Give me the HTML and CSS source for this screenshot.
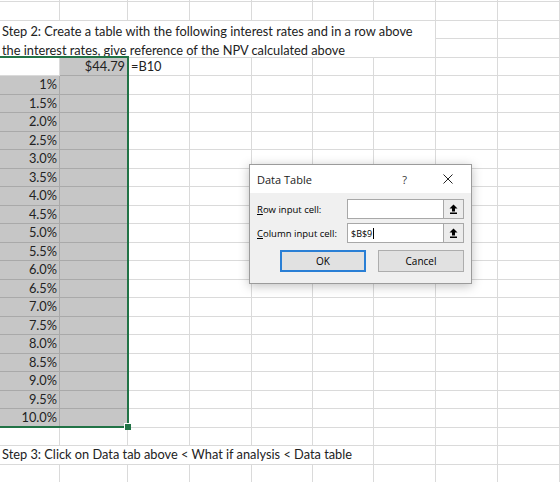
FILE: index.html
```html
<!DOCTYPE html>
<html lang="en">
<head>
    <meta charset="UTF-8">
    <meta name="viewport" content="width=device-width, initial-scale=1.0">
    <title>NPV Data Table</title>
    <link rel="stylesheet" href="styles.css">
</head>
<body>
    <div class="sheet">
        <!-- top sliver of the row above -->
        <div></div><div></div><div></div><div></div><div></div><div></div><div></div><div></div><div></div>
        <!-- blank row -->
        <div></div><div></div><div></div><div></div><div></div><div></div><div></div><div></div><div></div>

        <!-- merged instruction cell -->
        <div class="note">Step 2: Create a table with the following interest rates and in a row above<br>the interest rates, give reference of the NPV calculated above</div>
        <div></div><div></div>
        <div></div><div></div>

        <!-- NPV reference row -->
        <div></div><div class="sel num">$44.79</div><div>=B10</div><div></div><div></div><div></div><div></div><div></div><div></div>

        <!-- interest rates -->
        <div class="sel num">1%</div><div class="sel"></div><div></div><div></div><div></div><div></div><div></div><div></div><div></div>
        <div class="sel num">1.5%</div><div class="sel"></div><div></div><div></div><div></div><div></div><div></div><div></div><div></div>
        <div class="sel num">2.0%</div><div class="sel"></div><div></div><div></div><div></div><div></div><div></div><div></div><div></div>
        <div class="sel num">2.5%</div><div class="sel"></div><div></div><div></div><div></div><div></div><div></div><div></div><div></div>
        <div class="sel num">3.0%</div><div class="sel"></div><div></div><div></div><div></div><div></div><div></div><div></div><div></div>
        <div class="sel num">3.5%</div><div class="sel"></div><div></div><div></div><div></div><div></div><div></div><div></div><div></div>
        <div class="sel num">4.0%</div><div class="sel"></div><div></div><div></div><div></div><div></div><div></div><div></div><div></div>
        <div class="sel num">4.5%</div><div class="sel"></div><div></div><div></div><div></div><div></div><div></div><div></div><div></div>
        <div class="sel num">5.0%</div><div class="sel"></div><div></div><div></div><div></div><div></div><div></div><div></div><div></div>
        <div class="sel num">5.5%</div><div class="sel"></div><div></div><div></div><div></div><div></div><div></div><div></div><div></div>
        <div class="sel num">6.0%</div><div class="sel"></div><div></div><div></div><div></div><div></div><div></div><div></div><div></div>
        <div class="sel num">6.5%</div><div class="sel"></div><div></div><div></div><div></div><div></div><div></div><div></div><div></div>
        <div class="sel num">7.0%</div><div class="sel"></div><div></div><div></div><div></div><div></div><div></div><div></div><div></div>
        <div class="sel num">7.5%</div><div class="sel"></div><div></div><div></div><div></div><div></div><div></div><div></div><div></div>
        <div class="sel num">8.0%</div><div class="sel"></div><div></div><div></div><div></div><div></div><div></div><div></div><div></div>
        <div class="sel num">8.5%</div><div class="sel"></div><div></div><div></div><div></div><div></div><div></div><div></div><div></div>
        <div class="sel num">9.0%</div><div class="sel"></div><div></div><div></div><div></div><div></div><div></div><div></div><div></div>
        <div class="sel num">9.5%</div><div class="sel"></div><div></div><div></div><div></div><div></div><div></div><div></div><div></div>
        <div class="sel num">10.0%</div><div class="sel"></div><div></div><div></div><div></div><div></div><div></div><div></div><div></div>

        <!-- blank row -->
        <div></div><div></div><div></div><div></div><div></div><div></div><div></div><div></div><div></div>
        <!-- step 3 text overflows across the row -->
        <div class="wide">Step 3: Click on Data tab above &lt; What if analysis &lt; Data table</div><div></div><div></div><div></div>
        <!-- blank row -->
        <div></div><div></div><div></div><div></div><div></div><div></div><div></div><div></div><div></div>

        <!-- selection outline and fill handle -->
        <span class="selection"></span>
        <span class="handle"></span>
    </div>

    <div class="dialog">
        <div class="dlg-title">
            <span class="dlg-name">Data Table</span>
            <span class="dlg-help">?</span>
            <span class="dlg-close">
                <svg width="10" height="10" viewBox="0 0 10 10"><path d="M0.5 0.5 L9.5 9.5 M9.5 0.5 L0.5 9.5" stroke="#222" stroke-width="1" fill="none"/></svg>
            </span>
        </div>
        <div class="dlg-body">
            <div class="field">
                <label><u>R</u>ow input cell:</label>
                <div class="ref">
                    <span class="ref-value"></span>
                    <span class="ref-btn">
                        <svg width="9" height="10" viewBox="0 0 9 10"><path d="M4.5 0.5 L8.5 4.5 H6 V7.5 H3 V4.5 H0.5 Z" fill="#000"/><rect x="1" y="8.5" width="7" height="1.5" fill="#000"/></svg>
                    </span>
                </div>
            </div>
            <div class="field">
                <label><u>C</u>olumn input cell:</label>
                <div class="ref">
                    <span class="ref-value">$B$9<span class="caret"></span></span>
                    <span class="ref-btn">
                        <svg width="9" height="10" viewBox="0 0 9 10"><path d="M4.5 0.5 L8.5 4.5 H6 V7.5 H3 V4.5 H0.5 Z" fill="#000"/><rect x="1" y="8.5" width="7" height="1.5" fill="#000"/></svg>
                    </span>
                </div>
            </div>
            <div class="actions">
                <button class="btn btn-default">OK</button>
                <button class="btn">Cancel</button>
            </div>
        </div>
    </div>
</body>
</html>
```

FILE: styles.css
```css
* {
    box-sizing: border-box;
}

body {
    margin: 0;
    overflow: hidden;
    background: #fff;
    font-family: Lato, "Liberation Sans", sans-serif;
    font-size: 12.8px;
    color: #222;
}

.sheet {
    position: relative;
    display: grid;
    grid-template-columns: 60px 68px 62px 62px 61px 61px 62px 62px 62px;
    grid-template-rows: 2px repeat(26, 18.5px);
}

.sheet > div {
    border-right: 1px solid #dadada;
    border-bottom: 1px solid #dadada;
    line-height: 17.5px;
    padding: 0 3px;
    white-space: nowrap;
}

.sheet > .sel {
    background: #c6c6c6;
    border-color: #a9a9a9;
}

.sheet > .num {
    text-align: right;
    padding-right: 2px;
}

.sheet > .note {
    grid-column: span 7;
    grid-row: span 2;
    white-space: normal;
    line-height: 18.5px;
    padding: 1.5px 2px 0;
}

.sheet > .wide {
    grid-column: span 6;
    padding-left: 2px;
}

.selection {
    position: absolute;
    left: -2px;
    top: 56px;
    width: 131px;
    height: 372px;
    border: 2px solid #217346;
}

.handle {
    position: absolute;
    left: 125px;
    top: 424px;
    width: 6px;
    height: 6px;
    background: #217346;
    box-shadow: -1px -1px 0 #fff;
}

/* dialog */

.dialog {
    position: absolute;
    left: 249px;
    top: 164px;
    width: 223px;
    height: 120px;
    background: #f0f0f0;
    border: 1px solid #9b9b9b;
    box-shadow: 0 2px 10px rgba(0, 0, 0, 0.25);
    font-family: "Open Sans", "Noto Sans", sans-serif;
    color: #000;
}

.dlg-title {
    display: flex;
    align-items: center;
    height: 28px;
    background: #fff;
    padding-left: 7px;
    font-size: 11px;
    color: #1a1a1a;
}

.dlg-name {
    flex: 1;
}

.dlg-help {
    width: 41px;
    text-align: center;
    color: #333;
}

.dlg-close {
    width: 46px;
    display: flex;
    justify-content: center;
}

.dlg-body {
    padding: 6px 7px 0 7px;
}

.field {
    display: flex;
    align-items: center;
    height: 20px;
    margin-bottom: 4px;
}

.field label {
    width: 90px;
    font-size: 9.5px;
}

.ref {
    display: flex;
    width: 117px;
    height: 20px;
    border: 1px solid #a8a8a8;
    background: #fff;
}

.ref-value {
    flex: 1;
    display: flex;
    align-items: center;
    padding-left: 3px;
    font-size: 9px;
}

.caret {
    display: inline-block;
    width: 1px;
    height: 11px;
    margin-left: 1px;
    background: #000;
}

.ref-btn {
    width: 20px;
    display: flex;
    align-items: center;
    justify-content: center;
    border-left: 1px solid #a8a8a8;
    background: #ececec;
}

.actions {
    display: flex;
    justify-content: flex-end;
    gap: 12px;
    margin-top: 7px;
}

.btn {
    width: 86px;
    height: 22px;
    padding: 0;
    border: 1px solid #adadad;
    background: #e1e1e1;
    font-family: "Open Sans", "Noto Sans", sans-serif;
    font-size: 10px;
    color: #000;
}

.btn-default {
    border: 2px solid #2a7fd5;
}
```
